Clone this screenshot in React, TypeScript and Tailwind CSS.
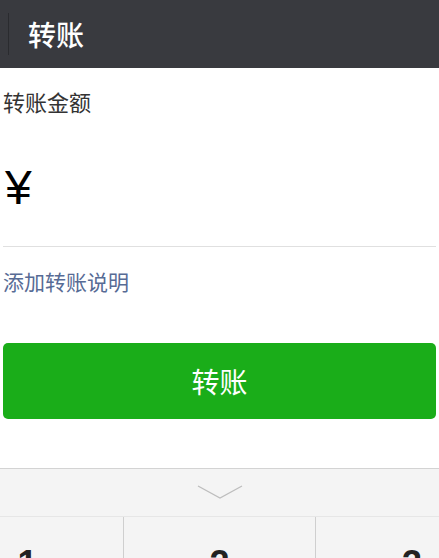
import React from "react"

const font = { fontFamily: '"Noto Sans CJK SC", "Noto Sans", sans-serif' }

export default function App() {
  return (
    <div className="w-[439px] h-[558px] overflow-hidden bg-white" style={font}>
      {/* header */}
      <div className="h-[68px] bg-[#393a3f] flex items-center">
        <div className="ml-[8px] w-px h-[42px] bg-[#2a2b2f]" />
        <div className="ml-[19px] text-[28px] leading-[30px] font-medium text-white">转账</div>
      </div>

      <div className="px-[3px]">
        <div className="mt-[18px] text-[22px] leading-[30px] text-[#333]">转账金额</div>
        <div className="border-b border-[#e0e0e0] pt-[48px] pb-[34px]">
          <span
            className="block text-[48px] leading-[48px] text-black pl-[2px]"
            style={{ fontFamily: '"Liberation Sans", sans-serif' }}
          >
            ¥
          </span>
        </div>
        <div className="mt-[19px] text-[21px] leading-[30px] text-[#576b95]">添加转账说明</div>
        <button className="mt-[47px] w-full h-[76px] rounded-[5px] bg-[#1aad19] text-white text-[28px] leading-[30px]">
          转账
        </button>
      </div>

      {/* keyboard */}
      <div className="mt-[49px] border-t border-[#d3d3d3] bg-[#f4f4f4]">
        <div className="h-[48px] flex items-center justify-center border-b border-[#e6e6e6]">
          <svg width="46" height="15" viewBox="0 0 46 15" fill="none">
            <polyline points="1,1 23,13 45,1" stroke="#bdbdbd" strokeWidth="1.3" />
          </svg>
        </div>
        <div className="ml-[-68px] w-[576px] grid grid-cols-3">
          {["1", "2", "3"].map((d, i) => (
            <div
              key={d}
              className={
                "h-[60px] pt-[29px] text-center text-[36px] leading-[36px] font-bold text-[#222] " +
                (i < 2 ? "border-r border-[#cfcfcf]" : "")
              }
              style={{ fontFamily: '"Liberation Sans", sans-serif' }}
            >
              {d}
            </div>
          ))}
        </div>
      </div>
    </div>
  )
}
